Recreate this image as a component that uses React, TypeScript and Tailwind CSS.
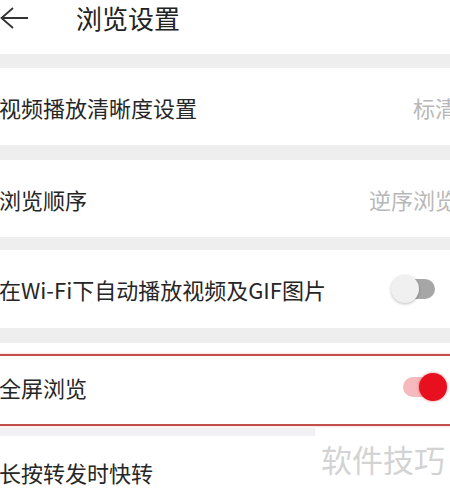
import React from "react";

const font = { fontFamily: '"Noto Sans CJK SC", "Noto Sans", sans-serif' };

function Gap({ h }: { h: string }) {
  return <div className={`${h} bg-[#eeeeee]`} />;
}

function Toggle({ on }: { on: boolean }) {
  if (on) {
    return (
      <div className="relative w-[45px] h-[28px] flex items-center">
        <div className="ml-[1px] w-[36px] h-[20px] rounded-full bg-[#f6b9bd]" />
        <div className="absolute right-0 w-[28px] h-[28px] rounded-full bg-[#e8101e] shadow-[0_0_3px_rgba(230,0,20,0.5)]" />
      </div>
    );
  }
  return (
    <div className="relative w-[46px] h-[28px] flex items-center">
      <div className="ml-[12px] w-[32px] h-[20px] rounded-full bg-[#a6a6a6]" />
      <div className="absolute left-0 w-[28px] h-[28px] rounded-full bg-[#f0f0f0] shadow-[0_1px_3px_rgba(0,0,0,0.25)]" />
    </div>
  );
}

function Row({ label, value, h }: { label: string; value: string; h: string }) {
  return (
    <div className={`${h} bg-white flex items-center justify-between`}>
      <span className="-ml-[1px] text-[22px] text-[#262626] leading-[30px]">{label}</span>
      <span className="-mr-[7px] text-[22px] text-[#b8b8b8] leading-[30px] whitespace-nowrap">
        {value}
      </span>
    </div>
  );
}

export default function App() {
  return (
    <div className="relative w-[450px] h-[494px] overflow-hidden bg-white" style={font}>
      {/* Header */}
      <div className="h-[54px] flex items-start">
        <div className="h-[36px] flex items-center">
          <svg width="30" height="28" viewBox="0 0 30 28">
            <path
              d="M13 4 L1.5 14 L13 24 M1.5 14 H28"
              fill="none"
              stroke="#333"
              strokeWidth="1.8"
            />
          </svg>
          <span className="ml-[46px] text-[26px] text-[#222] leading-[36px]">浏览设置</span>
        </div>
      </div>
      <Gap h="h-[14px]" />
      <Row h="h-[77px]" label="视频播放清晰度设置" value="标清" />
      <Gap h="h-[15px]" />
      <Row h="h-[77px]" label="浏览顺序" value="逆序浏览" />
      <Gap h="h-[13px]" />
      <div className="h-[78px] bg-white flex items-center justify-between pr-[13px]">
        <span className="-ml-[1px] text-[22px] text-[#262626] leading-[30px]">
          在Wi-Fi下自动播放视频及GIF图片
        </span>
        <Toggle on={false} />
      </div>
      <Gap h="h-[15px]" />
      <div className="relative h-[85px] bg-white flex items-center justify-between pr-[3px] pt-[2px]">
        <span className="-ml-[1px] text-[22px] text-[#262626] leading-[30px]">全屏浏览</span>
        <Toggle on={true} />
        {/* red annotation box */}
        <div className="absolute -left-[4px] -right-[4px] top-[11px] h-[72px] border-2 border-[#c0504d] shadow-[0_0_2px_rgba(240,120,100,0.5)] pointer-events-none" />
      </div>
      <div className="h-[8px] w-[315px] bg-[#f1f1f3]" />
      <div className="relative h-[58px] bg-white">
        <span className="absolute left-[-1px] top-[14px] text-[22px] text-[#262626] leading-[44px]">
          长按转发时快转
        </span>
        <span className="absolute left-[321px] top-[2px] text-[31px] text-[#d3d3d3] leading-[42px]">
          软件技巧
        </span>
      </div>
    </div>
  );
}
